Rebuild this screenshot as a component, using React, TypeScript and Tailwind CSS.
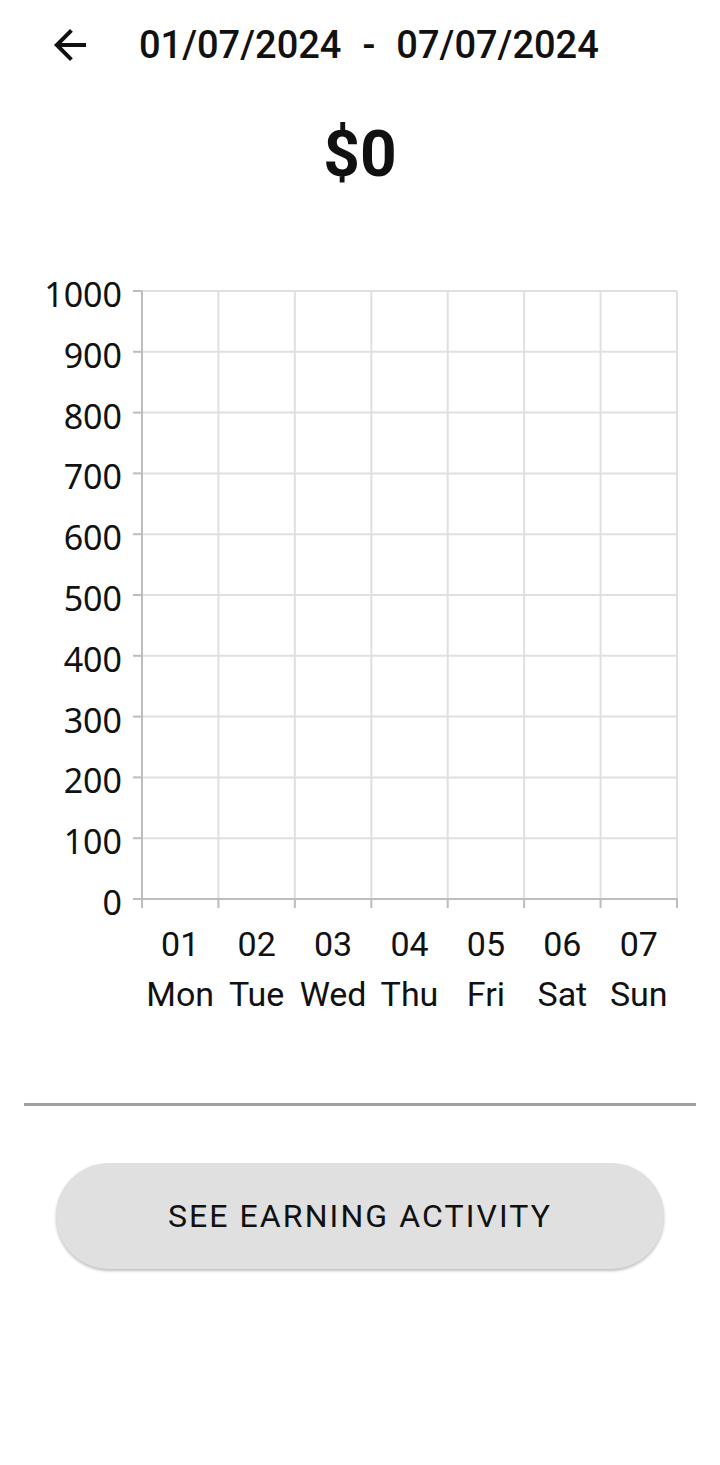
import React from "react";

const yLabels = ["1000", "900", "800", "700", "600", "500", "400", "300", "200", "100", "0"];
const days = [
  ["01", "Mon"],
  ["02", "Tue"],
  ["03", "Wed"],
  ["04", "Thu"],
  ["05", "Fri"],
  ["06", "Sat"],
  ["07", "Sun"],
];

const X0 = 142;
const X1 = 677;
const Y0 = 21;
const Y1 = 629;

function Chart() {
  const stepY = (Y1 - Y0) / 10;
  const stepX = (X1 - X0) / 7;
  return (
    <svg width="720" height="760" viewBox="0 0 720 760" className="block">
      {yLabels.map((_, i) => {
        const y = Y0 + i * stepY;
        return (
          <line key={"h" + i} x1={X0} x2={X1} y1={y} y2={y} stroke="#e0e0e0" strokeWidth={2} />
        );
      })}
      {Array.from({ length: 8 }).map((_, i) => {
        const x = X0 + i * stepX;
        return (
          <line key={"v" + i} x1={x} x2={x} y1={Y0} y2={Y1} stroke="#e0e0e0" strokeWidth={2} />
        );
      })}
      <line x1={X0} x2={X0} y1={Y0} y2={Y1} stroke="#bdbdbd" strokeWidth={2} />
      {yLabels.map((_, i) => {
        const y = Y0 + i * stepY;
        return <line key={"yt" + i} x1={X0 - 9} x2={X0} y1={y} y2={y} stroke="#bdbdbd" strokeWidth={2} />;
      })}
      <line x1={X0 - 1} x2={X1 + 1} y1={Y1} y2={Y1} stroke="#bdbdbd" strokeWidth={2} />
      {Array.from({ length: 8 }).map((_, i) => {
        const x = X0 + i * stepX;
        return <line key={"xt" + i} x1={x} x2={x} y1={Y1} y2={Y1 + 9} stroke="#bdbdbd" strokeWidth={2} />;
      })}
      {yLabels.map((l, i) => {
        const y = Y0 + i * stepY;
        return (
          <text
            key={"yl" + i}
            x={122}
            y={y + 16}
            textAnchor="end"
            fontFamily="'Noto Sans', sans-serif"
            fontSize={34}
            fill="#111"
          >
            {l}
          </text>
        );
      })}
      {days.map(([n, d], i) => {
        const x = X0 + (i + 0.5) * stepX;
        return (
          <g key={"xl" + i}>
            <text x={x} y={686} textAnchor="middle" fontFamily="Roboto, sans-serif" fontSize={34} fill="#111">
              {n}
            </text>
            <text x={x} y={736} textAnchor="middle" fontFamily="Roboto, sans-serif" fontSize={34} fill="#111">
              {d}
            </text>
          </g>
        );
      })}
    </svg>
  );
}

export default function App() {
  return (
    <div className="w-[720px] h-[1465px] bg-white flex flex-col text-black" style={{ fontFamily: "Roboto, sans-serif" }}>
      <div className="flex items-center h-[90px] pl-[46px]">
        <svg width="48" height="48" viewBox="0 0 24 24" className="shrink-0">
          <path d="M20 11H7.83l5.59-5.59L12 4l-8 8 8 8 1.41-1.41L7.83 13H20v-2z" fill="#111" />
        </svg>
        <div className="ml-[45px] flex items-center font-medium text-[38px] leading-none text-[#111]">
          <span>01/07/2024</span>
          <span className="mx-[21px]">-</span>
          <span>07/07/2024</span>
        </div>
      </div>
      <div className="h-[130px] flex items-start justify-center pt-[30px]">
        <span className="font-bold text-[64px] leading-none text-[#111] mt-[3px]">$0</span>
      </div>
      <div className="mt-[50px]">
        <Chart />
      </div>
      <div className="mt-[73px] mx-[24px] h-[3px] bg-[#a0a0a0]" />
      <div className="mt-[57px] px-[56px]">
        <button className="w-full h-[106px] rounded-full bg-[#e0e0e0] shadow-[0_2px_3px_rgba(0,0,0,0.25)] text-[32px] tracking-[2.1px] text-[#111]">
          SEE EARNING ACTIVITY
        </button>
      </div>
    </div>
  );
}
